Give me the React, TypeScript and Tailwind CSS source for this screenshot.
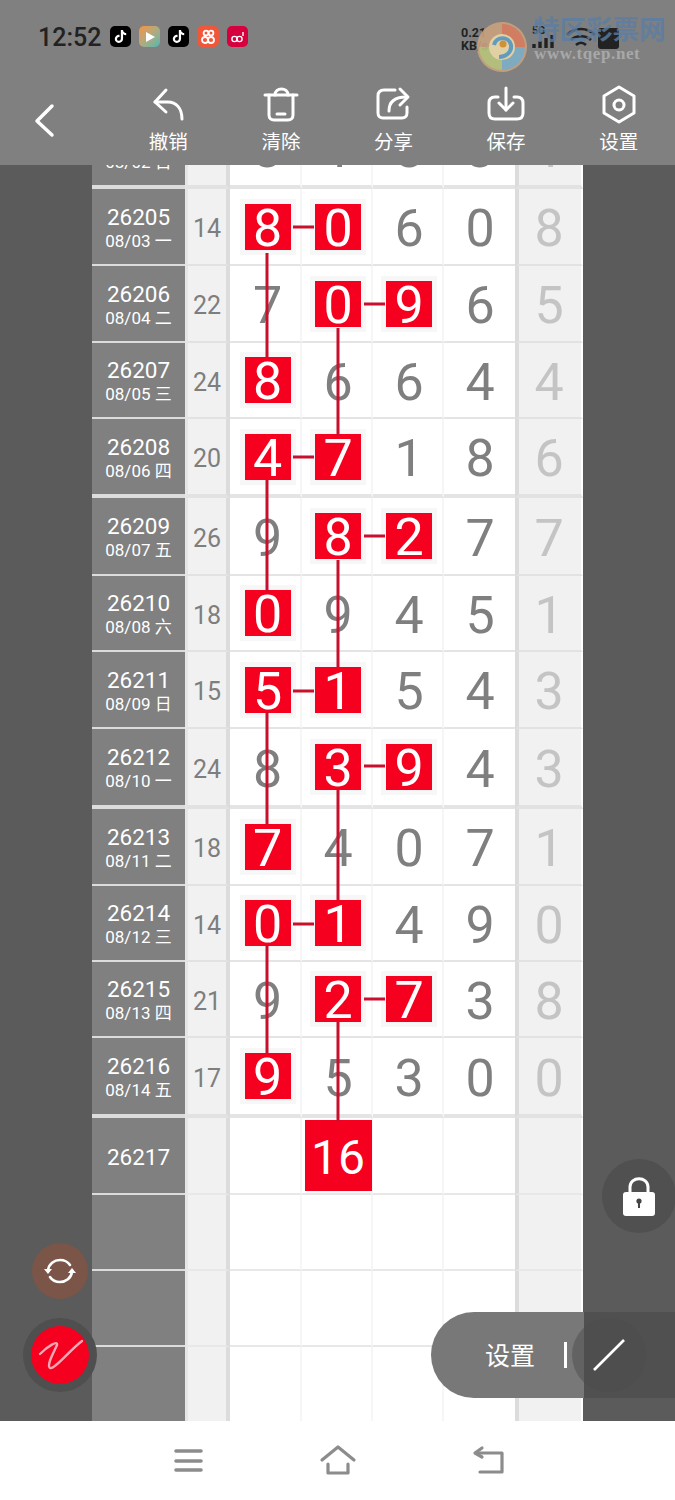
import React from "react";
import { FaTiktok } from "react-icons/fa";

type RowData = { id: string; date: string; sum: string; nums: string[]; last: string; hit: number[] };
const F = { fontFamily: "Roboto, 'Noto Sans CJK SC', sans-serif" };

const groups: RowData[][] = [
  [
    { id: "26205", date: "08/03 一", sum: "14", nums: ["8", "0", "6", "0"], last: "8", hit: [0, 1] },
    { id: "26206", date: "08/04 二", sum: "22", nums: ["7", "0", "9", "6"], last: "5", hit: [1, 2] },
    { id: "26207", date: "08/05 三", sum: "24", nums: ["8", "6", "6", "4"], last: "4", hit: [0] },
    { id: "26208", date: "08/06 四", sum: "20", nums: ["4", "7", "1", "8"], last: "6", hit: [0, 1] },
  ],
  [
    { id: "26209", date: "08/07 五", sum: "26", nums: ["9", "8", "2", "7"], last: "7", hit: [1, 2] },
    { id: "26210", date: "08/08 六", sum: "18", nums: ["0", "9", "4", "5"], last: "1", hit: [0] },
    { id: "26211", date: "08/09 日", sum: "15", nums: ["5", "1", "5", "4"], last: "3", hit: [0, 1] },
    { id: "26212", date: "08/10 一", sum: "24", nums: ["8", "3", "9", "4"], last: "3", hit: [1, 2] },
  ],
  [
    { id: "26213", date: "08/11 二", sum: "18", nums: ["7", "4", "0", "7"], last: "1", hit: [0] },
    { id: "26214", date: "08/12 三", sum: "14", nums: ["0", "1", "4", "9"], last: "0", hit: [0, 1] },
    { id: "26215", date: "08/13 四", sum: "21", nums: ["9", "2", "7", "3"], last: "8", hit: [1, 2] },
    { id: "26216", date: "08/14 五", sum: "17", nums: ["9", "5", "3", "0"], last: "0", hit: [0] },
  ],
];

const colCls = [
  "w-[72px] pl-[5px] border-r-2 border-r-[#f6f6f6]",
  "w-[71px] pl-[3px] border-r-2 border-r-[#f6f6f6]",
  "w-[71px] pl-[3px] border-r-2 border-r-[#f6f6f6]",
  "w-[71px] pl-[1px]",
];

function Row({ d, h, thick }: { d: RowData; h: string; thick?: boolean }) {
  const bw = thick ? "border-b-4" : "border-b-2";
  return (
    <div className={`flex shrink-0 ${h}`}>
      <div className={`w-[93px] pt-[4px] bg-[#808080] ${bw} border-[#dcdcdc] flex flex-col items-center justify-center text-white`}>
        <div className="text-[22.5px] leading-[25px]">{d.id}</div>
        <div className="text-[17px] leading-[23px]">{d.date}</div>
      </div>
      <div className={`w-[45px] pt-[5px] bg-[#f1f1f1] border-l-[3px] border-r-4 ${bw} border-l-[#e6e6e6] border-r-[#dcdcdc] border-b-[#e2e2e2] flex items-center justify-center text-[25px] text-[#7e7e7e]`}>
        {d.sum}
      </div>
      {d.nums.map((n, i) => (
        <div key={i} className={`${colCls[i]} ${bw} border-b-[#e4e4e4] bg-white flex items-center justify-center`}>
          {d.hit.includes(i) ? (
            <div className="w-[46px] h-[46px] pt-[4px] bg-[#f5001e] ring-[5px] ring-[#f7f7f7] text-white text-[52px] font-[450] leading-none flex items-center justify-center">{n}</div>
          ) : (
            <span className="pt-[5px] text-[#7f7f7f] text-[52px] font-[450] leading-none">{n}</span>
          )}
        </div>
      ))}
      <div className={`w-[68px] pt-[5px] pr-[2px] bg-[#f1f1f1] border-l-4 border-r-2 border-l-[#dcdcdc] border-r-white ${bw} border-b-[#e2e2e2] flex items-center justify-center text-[52px] font-[450] leading-none text-[#c4c4c4]`}>
        {d.last}
      </div>
    </div>
  );
}

function EmptyRow({ h, id, big, last }: { h: string; id?: string; big?: boolean; last?: boolean }) {
  const bw = last ? "" : "border-b-2";
  return (
    <div className={`flex shrink-0 ${h}`}>
      <div className={`w-[93px] pt-[4px] bg-[#808080] ${bw} border-[#dcdcdc] flex items-center justify-center text-white text-[22.5px]`}>{id}</div>
      <div className={`w-[45px] bg-[#f1f1f1] border-l-[3px] border-r-4 ${bw} border-l-[#e6e6e6] border-r-[#dcdcdc] border-b-[#e8e8e8]`} />
      {[0, 1, 2, 3].map((i) => (
        <div key={i} className={`${colCls[i]} ${bw} border-b-[#e8e8e8] bg-white flex items-center justify-center`}>
          {big && i === 1 && <div className="w-[67px] h-[71px] shrink-0 pt-[4px] bg-[#f5001e] text-white text-[48px] font-[450] leading-none flex items-center justify-center">16</div>}
        </div>
      ))}
      <div className={`w-[68px] bg-[#f1f1f1] border-l-4 border-r-2 border-l-[#dcdcdc] border-r-white ${bw} border-b-[#e8e8e8]`} />
    </div>
  );
}

const tools = [
  { label: "撤销", vb: "148 84 40 40", icon: <><path d="M155 102H168C176 102 182 108 182 119" /><path d="M166 90L155 102L166 112" /></> },
  { label: "清除", vb: "261 84 40 40", icon: <><path d="M265 95H297" /><path d="M275 95C275 87 288 87 288 95" /><path d="M269 95V115C269 118 271 120 274 120H288C291 120 293 118 293 115V95" /><path d="M277 114H285" /></> },
  { label: "分享", vb: "374 84 40 40", icon: <><path d="M396 90H385C381 90 379 92 379 96V113C379 116 381 118 384 118H403C406 118 408 116 408 113V107" /><path d="M390 111C390 102 395 97 407 97" /><path d="M401 89L409 97L401 105" /></> },
  { label: "保存", vb: "486 84 40 40", icon: <><path d="M498 97H495C491 97 489 99 489 103V113C489 117 491 119 495 119H517C521 119 523 117 523 113V103C523 99 521 97 517 97H514" /><path d="M506 88V110" /><path d="M499 103L506 110L513 103" /></> },
  { label: "设置", vb: "599 84 40 40", icon: <><path d="M619 87L634 96V113L619 122L604 113V96Z" /><circle cx="619" cy="105" r="5" /></> },
];

const partial: RowData = { id: "26204", date: "08/02 日", sum: "", nums: ["3", "1", "8", "3"], last: "1", hit: [] };

export default function App() {
  return (
    <div className="relative w-[675px] h-[1500px] overflow-hidden flex flex-col bg-white" style={F}>
      {/* header */}
      <div className="relative z-10 h-[165px] shrink-0 bg-[#808080] flex flex-col">
        <div className="h-[84px] flex items-start pt-[24px] pl-[38px]">
          <span className="text-[25px] leading-[27px] font-medium text-[#222] w-[72px]">12:52</span>
          <div className="flex gap-[8px] mt-[2px]">
            <div className="w-[21px] h-[21px] rounded-[5px] bg-black flex items-center justify-center text-white"><FaTiktok size={13} /></div>
            <div className="w-[21px] h-[21px] rounded-[5px] bg-gradient-to-br from-[#f5913a] to-[#3fb8b0] flex items-center justify-center">
              <svg width="12" height="12" viewBox="0 0 12 12"><path d="M2 1L11 6L2 11Z" fill="#fff" /></svg>
            </div>
            <div className="w-[21px] h-[21px] rounded-[5px] bg-black flex items-center justify-center text-white"><FaTiktok size={13} /></div>
            <div className="w-[22px] h-[21px] rounded-[5px] bg-[#f0563a] flex items-center justify-center">
              <svg width="16" height="16" viewBox="0 0 16 16" fill="none" stroke="#fff" strokeWidth="1.8"><circle cx="6" cy="4" r="2.4" /><circle cx="11" cy="4" r="2.4" /><circle cx="5" cy="11" r="3" /><circle cx="11" cy="11" r="3" /></svg>
            </div>
            <div className="w-[21px] h-[21px] rounded-[5px] bg-[#d6003f] flex items-center justify-center">
              <svg width="16" height="16" viewBox="0 0 16 16" fill="none" stroke="#fff" strokeWidth="1.4"><circle cx="4.5" cy="10" r="2.6" /><circle cx="9.5" cy="10" r="2.6" /><path d="M13 3V7" /></svg>
            </div>
          </div>
        </div>
        <div className="flex pl-[112px]">
          {tools.map((t) => (
            <div key={t.label} className="w-[113px] flex flex-col items-center">
              <svg width="40" height="40" viewBox={t.vb} fill="none" stroke="#fff" strokeWidth="3" strokeLinecap="round" strokeLinejoin="round">{t.icon}</svg>
              <span className="mt-[7px] text-[19.5px] leading-[24px] text-white">{t.label}</span>
            </div>
          ))}
        </div>
      </div>

      {/* status icons + watermark over the header */}
      <div className="absolute z-20 left-[461px] top-[26px] text-[12.5px] leading-[13px] font-bold text-[#222]">0.21<br />KB/s</div>
      <svg className="absolute z-20 left-[525px] top-[20px]" width="100" height="32" viewBox="525 20 100 32">
        <text x="532" y="34" fontSize="10.5" fontWeight="700" fill="#222">5G</text>
        <path d="M534 48V44M540 48V41M546 48V38M552 48V35" stroke="#222" strokeWidth="3.4" />
        <path d="M567 35C575 27 587 27 595 35M571 40C576 35 586 35 591 40M576 45C579 42 583 42 586 45" fill="none" stroke="#222" strokeWidth="2.6" />
        <rect x="598" y="28" width="21" height="21" rx="3" fill="#222" />
      </svg>
      <svg className="absolute z-30 left-[476px] top-[21px] opacity-90" width="52" height="52" viewBox="0 0 52 52">
        <circle cx="26" cy="26" r="25" fill="#c9a27e" />
        <path d="M26 3A23 23 0 0 1 49 26L36 26A10 10 0 0 0 26 16Z" fill="#d97d5e" />
        <path d="M49 26A23 23 0 0 1 26 49L26 38A12 12 0 0 0 38 26Z" fill="#7fb0c9" />
        <path d="M26 49A23 23 0 0 1 3 26L14 26A12 12 0 0 0 26 38Z" fill="#b9c47c" />
        <circle cx="26" cy="26" r="13" fill="#ecd9a8" />
        <path d="M18 24C20 15 33 15 35 24C36 31 30 36 23 36" fill="none" stroke="#5f9fc4" strokeWidth="4" />
        <circle cx="27" cy="23" r="3.5" fill="#d9922e" />
      </svg>
      <div className="absolute z-30 left-[533px] top-[14px] text-[26.5px] leading-[32px] font-bold text-[#5b7ea3] opacity-80">特区彩票网</div>
      <div className="absolute z-30 left-[534px] top-[44px] text-[17px] leading-[20px] font-bold text-[#a8a8a8] tracking-[0.6px]" style={{ fontFamily: "'Liberation Serif', serif" }}>www.tqep.net</div>

      {/* back chevron */}
      <svg className="absolute z-20 left-[32px] top-[102px]" width="24" height="38" viewBox="32 102 24 38" fill="none" stroke="#fff" strokeWidth="3.5" strokeLinecap="round" strokeLinejoin="round">
        <path d="M52 106L37 121L52 135" />
      </svg>

      {/* board */}
      <div className="h-[1256px] shrink-0 flex bg-[#5b5b5b]">
        <div className="w-[92px] shrink-0" />
        <div className="w-[492px] shrink-0 flex flex-col">
          <div className="h-[24px] shrink-0 overflow-hidden flex flex-col justify-end">
            <Row d={partial} h="h-[79px]" thick />
          </div>
          <Row d={groups[0][0]} h="h-[77px]" />
          <Row d={groups[0][1]} h="h-[77px]" />
          <Row d={groups[0][2]} h="h-[76px]" />
          <Row d={groups[0][3]} h="h-[79px]" thick />
          <Row d={groups[1][0]} h="h-[78px]" />
          <Row d={groups[1][1]} h="h-[76px]" />
          <Row d={groups[1][2]} h="h-[77px]" />
          <Row d={groups[1][3]} h="h-[80px]" thick />
          <Row d={groups[2][0]} h="h-[77px]" />
          <Row d={groups[2][1]} h="h-[76px]" />
          <Row d={groups[2][2]} h="h-[76px]" />
          <Row d={groups[2][3]} h="h-[80px]" thick />
          <EmptyRow h="h-[77px]" id="26217" big />
          <EmptyRow h="h-[76px]" />
          <EmptyRow h="h-[76px]" />
          <EmptyRow h="h-[74px]" last />
        </div>
        <div className="flex-1" />
      </div>

      {/* connecting lines */}
      <svg className="absolute left-0 top-0 pointer-events-none" width="675" height="1500" viewBox="0 0 675 1500" fill="none" stroke="#c8102e" strokeWidth="3">
        <path d="M267 253V358M267 480V592M267 712V825M267 945V1054" />
        <path d="M338 328V435M338 560V667M338 790V900M338 1022V1121" />
        <path d="M293 227H314M293 457H314M293 691H314M293 924H314" />
        <path d="M364 304H385M364 536H385M364 766H385M364 999H385" />
      </svg>

      {/* floating controls */}
      <div className="absolute left-[32px] top-[1243px] w-[56px] h-[56px] rounded-full bg-[#7a5548] flex items-center justify-center">
        <svg width="32" height="32" viewBox="0 0 32 32" fill="none" stroke="#fff" strokeWidth="2.6" strokeLinecap="round">
          <path d="M4 15C5 9 10 5 16 5C20 5 24 7 26 10" />
          <path d="M28 17C27 23 22 27 16 27C12 27 8 25 6 22" />
          <path d="M0 14H8L4 19Z" fill="#fff" stroke="none" />
          <path d="M24 18H32L28 13Z" fill="#fff" stroke="none" />
        </svg>
      </div>
      <div className="absolute left-[23px] top-[1318px] w-[74px] h-[74px] rounded-full bg-[#4f4f4f] flex items-center justify-center">
        <div className="w-[58px] h-[58px] rounded-full bg-[#f5001e]" />
      </div>
      <svg className="absolute left-[23px] top-[1318px]" width="74" height="74" viewBox="23 1318 74 74" fill="none" stroke="#f7a8b4" strokeWidth="2.4" strokeLinecap="round">
        <path d="M40 1354C48 1346 58 1340 57 1345C55 1350 46 1365 50 1368C54 1370 70 1350 82 1341" />
      </svg>

      <div className="absolute left-[602px] top-[1159px] w-[74px] h-[74px] rounded-full bg-[#505050] flex items-center justify-center">
        <svg width="36" height="44" viewBox="0 0 36 44">
          <path d="M9 20V13C9 2 27 2 27 13V20" fill="none" stroke="#fff" strokeWidth="3" />
          <rect x="2" y="18" width="32" height="24" rx="3" fill="#fff" />
          <circle cx="18" cy="27" r="2.6" fill="#444" />
          <path d="M18 27V34" stroke="#444" strokeWidth="2" />
        </svg>
      </div>

      <div className="absolute left-[431px] top-[1312px] w-[244px] h-[86px] rounded-l-[43px] bg-[#787878] overflow-hidden flex items-center">
        <span className="ml-[54px] pt-[4px] text-[25px] leading-[30px] text-white">设置</span>
        <div className="ml-[29px] w-[2.5px] h-[26px] bg-white" />
        <div className="absolute left-[153px] top-0 w-[91px] h-[86px] bg-[#505050]" />
        <div className="absolute left-[141px] top-[6px] w-[74px] h-[74px] rounded-full bg-[#4c4c4c]/50" />
        <svg className="absolute left-[160px] top-[25px]" width="36" height="36" viewBox="0 0 36 36">
          <path d="M3 33L33 3" stroke="#fff" strokeWidth="2.6" />
        </svg>
      </div>

      {/* nav bar */}
      <div className="flex-1 bg-white flex items-center justify-center gap-[106px]">
        <svg width="44" height="36" viewBox="165 1443 44 36" fill="none" stroke="#8c8c8c" strokeWidth="3.6" strokeLinecap="round">
          <path d="M175 1451H200M175 1461H200M175 1470H200" />
        </svg>
        <svg width="44" height="36" viewBox="315 1443 44 36" fill="none" stroke="#8c8c8c" strokeWidth="3.2" strokeLinecap="round" strokeLinejoin="round">
          <path d="M321 1460L337 1447L353 1460" />
          <path d="M327 1464V1473H347V1464" />
        </svg>
        <svg width="44" height="36" viewBox="465 1443 44 36" fill="none" stroke="#8c8c8c" strokeWidth="3.2" strokeLinecap="round" strokeLinejoin="round">
          <path d="M475 1453H501V1472H479" />
          <path d="M481 1448L474 1453L481 1457" />
        </svg>
      </div>
    </div>
  );
}
